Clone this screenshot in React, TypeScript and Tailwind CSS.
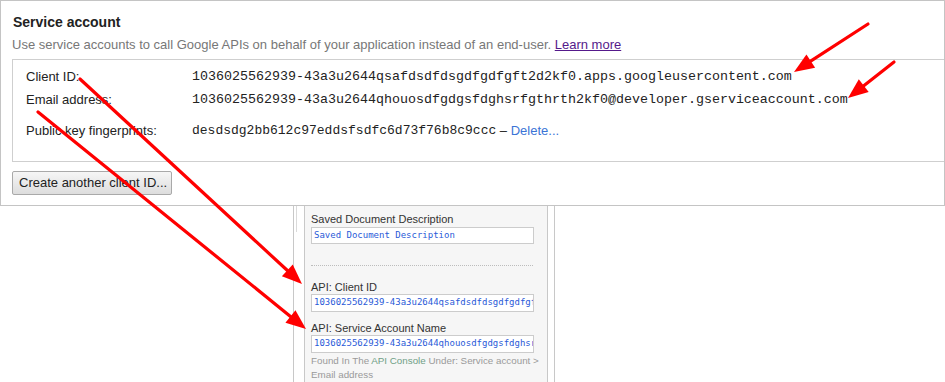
import React from 'react'

const sans = { fontFamily: '"Liberation Sans", Arial, sans-serif' }

type Arrow = { x1: number; y1: number; x2: number; y2: number }

// Red annotation arrows drawn over the screenshot
const arrows: Arrow[] = [
  { x1: 868, y1: 24, x2: 794, y2: 72 },
  { x1: 894, y1: 62, x2: 848, y2: 98 },
  { x1: 80, y1: 79, x2: 302, y2: 284 },
  { x1: 38, y1: 112, x2: 306, y2: 329 },
]

const ArrowShape = ({ x1, y1, x2, y2 }: Arrow) => {
  const dx = x2 - x1
  const dy = y2 - y1
  const len = Math.hypot(dx, dy)
  const ux = dx / len
  const uy = dy / len
  const headLen = 20
  const half = 8
  const bx = x2 - ux * headLen
  const by = y2 - uy * headLen
  const p1 = `${bx - uy * half},${by + ux * half}`
  const p2 = `${bx + uy * half},${by - ux * half}`
  return (
    <g>
      <line x1={x1} y1={y1} x2={bx + ux * 2} y2={by + uy * 2} stroke="#ff0000" strokeWidth={3.2} strokeLinecap="round" />
      <polygon points={`${x2},${y2} ${p1} ${p2}`} fill="#ff0000" />
    </g>
  )
}

const Row = ({ label, children, className = '' }: { label: string; children: React.ReactNode; className?: string }) => (
  <div className={`flex items-center ${className}`}>
    <div className="w-[179px] shrink-0 pl-[13px] text-[13px] text-[#222]">{label}</div>
    <div className="flex items-center whitespace-nowrap">{children}</div>
  </div>
)

const mono = { fontFamily: '"Liberation Mono", "Courier New", monospace' }
const inputMono = { fontFamily: '"DejaVu Sans Mono", monospace' }

const FieldInput = ({ value, h }: { value: string; h: string }) => (
  <div
    className={`${h} w-[223px] border border-[#cccccc] bg-white pl-[2px] text-[9px] leading-[15px] text-[#2a5ad8] overflow-hidden whitespace-nowrap`}
    style={inputMono}
  >
    {value}
  </div>
)

export default function App() {
  return (
    <div className="relative w-[945px] h-[382px] overflow-hidden bg-white" style={sans}>
      {/* Service account panel */}
      <div className="h-[206px] w-[945px] border border-[#c4c4c4]">
        <div className="pl-[12px] pt-[12px] text-[14px] leading-[18px] font-bold text-[#222]">Service account</div>
        <div className="pl-[11px] mt-[5px] text-[13px] leading-[18px] text-[#777]">
          Use service accounts to call Google APIs on behalf of your application instead of an end-user.{' '}
          <span className="text-[#551a8b] underline">Learn more</span>
        </div>
        <div className="ml-[11px] mt-[5px] h-[103px] border-l border-t border-b border-[#cfcfcf] pt-[5px]">
          <Row label="Client ID:" className="h-[23px]">
            <span className="text-[13.33px] text-[#222]" style={mono}>
              1036025562939-43a3u2644qsafdsdfdsgdfgdfgft2d2kf0.apps.googleusercontent.com
            </span>
          </Row>
          <Row label="Email address:" className="h-[23px]">
            <span className="text-[13.33px] text-[#222]" style={mono}>
              1036025562939-43a3u2644qhouosdfgdgsfdghsrfgthrth2kf0@developer.gserviceaccount.com
            </span>
          </Row>
          <Row label="Public key fingerprints:" className="h-[24px] mt-[8px]">
            <span className="text-[13px] text-[#222]" style={mono}>
              desdsdg2bb612c97eddsfsdfc6d73f76b8c9ccc
            </span>
            <span className="text-[13px] text-[#222]">&nbsp;–&nbsp;</span>
            <span className="text-[13px] text-[#3b74d6]">Delete...</span>
          </Row>
        </div>
        <button className="ml-[11px] mt-[9px] h-[24px] w-[160px] rounded-[2px] border border-[#a9a9a9] bg-gradient-to-b from-[#f6f6f6] to-[#dddddd] text-left pl-[6px] text-[13px] text-[#222]">
          Create another client ID...
        </button>
      </div>

      {/* Lower form panel */}
      <div className="flex h-[176px]">
        <div className="w-[293px] shrink-0" />
        <div className="w-[11px] shrink-0 border-l border-[#c8c8c8] flex">
          <div className="ml-[2px] h-[26px] border-l border-[#dadada]" />
        </div>
        <div className="w-[244px] shrink-0 border-l border-r border-[#c8c8c8] bg-[#f6f6f6] pl-[6px] pt-[6px] text-[11px] text-[#333]">
          <div className="h-[14px] leading-[14px]">Saved Document Description</div>
          <div className="mt-[1px]">
            <FieldInput value="Saved Document Description" h="h-[17px]" />
          </div>
          <div className="mt-[21px] w-[222px] border-t border-dotted border-[#bdbdbd]" />
          <div className="mt-[14px] h-[14px] leading-[14px]">API: Client ID</div>
          <FieldInput value="1036025562939-43a3u2644qsafdsdfdsgdfgdfgft2d2kf0.apps.googleusercontent.com" h="h-[18px]" />
          <div className="mt-[9px] h-[14px] leading-[14px]">API: Service Account Name</div>
          <FieldInput value="1036025562939-43a3u2644qhouosdfgdgsfdghsrfgthrth2kf0@developer.gserviceaccount.com" h="h-[18px]" />
          <div className="mt-[1px] text-[9.8px] leading-[14px] text-[#9a9a9a]">
            <div className="whitespace-nowrap">
              Found In The <span className="text-[#6f9f86]">API Console</span> Under: Service account &gt;
            </div>
            <div>Email address</div>
          </div>
        </div>
        <div className="w-[6px] shrink-0" />
        <div className="flex-1 border-l border-[#c8c8c8]" />
      </div>

      <svg className="pointer-events-none absolute inset-0" width={945} height={382} viewBox="0 0 945 382">
        {arrows.map((a, i) => (
          <ArrowShape key={i} {...a} />
        ))}
      </svg>
    </div>
  )
}
